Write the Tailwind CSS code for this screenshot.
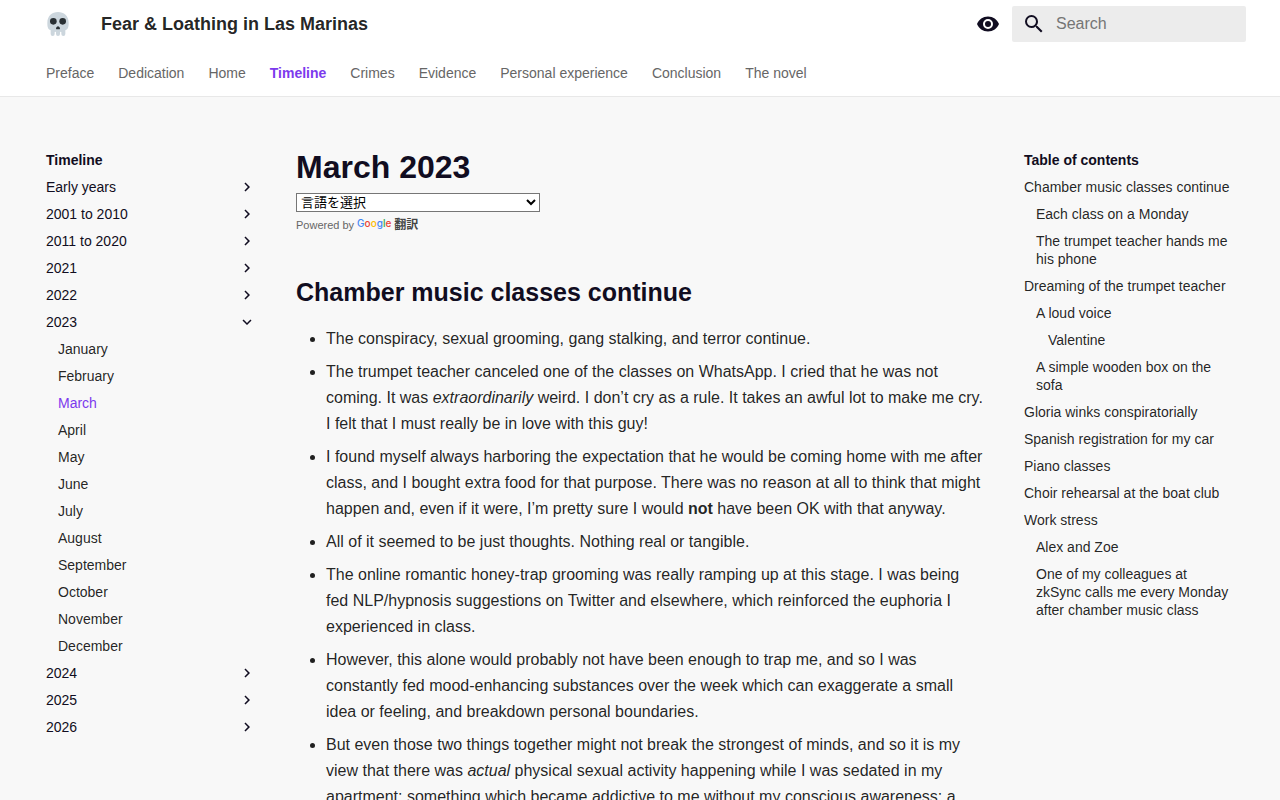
<!DOCTYPE html>
<html lang="en">
<head>
  <meta charset="UTF-8">
  <meta name="viewport" content="width=device-width, initial-scale=1">
  <title>March 2023 - Fear &amp; Loathing in Las Marinas</title>
  <script src="https://cdn.jsdelivr.net/npm/@tailwindcss/browser@4"></script>
</head>
<body class="bg-[#f8f8f8] text-black/87 font-['Liberation_Sans',Arial,sans-serif]">

  <svg class="hidden">
    <symbol id="chevron" viewBox="0 0 24 24">
      <path fill="currentColor" d="M8.59 16.58 13.17 12 8.59 7.41 10 6l6 6-6 6-1.41-1.42Z"/>
    </symbol>
  </svg>

  <!-- Header -->
  <header class="bg-white border-b border-[#e8e8e8]">
    <div class="max-w-[1220px] mx-auto">
      <div class="flex items-center h-12 pl-4 pr-1">
        <a href="#" aria-label="Home">
          <svg class="w-6 h-6" viewBox="0 0 36 36">
            <path fill="#CCD6DD" d="M34 16C34 6 26.837 0 18 0S2 6 2 16c0 6 .5 9.500 5 11.500V33a3 3 0 0 0 6 0v-2.500a1 1 0 0 1 2 0V33a3 3 0 0 0 6 0v-2.500a1 1 0 0 1 2 0V33a3 3 0 0 0 6 0v-5.500c4.500-2 5-5.500 5-11.500Z"/>
            <circle fill="#292F33" cx="11" cy="14" r="5"/>
            <circle fill="#292F33" cx="25" cy="14" r="5"/>
            <path fill="#292F33" d="M18 21.500c-1.200 0-3 2-3 3.200 0 .8.6 1.300 1.500 1.300h3c.9 0 1.500-.5 1.500-1.300 0-1.200-1.800-3.200-3-3.200Z"/>
          </svg>
        </a>
        <a href="#" class="ml-[31px] flex-1 text-lg leading-6 font-bold">Fear &amp; Loathing in Las Marinas</a>
        <button type="button" aria-label="Switch to dark mode" class="mr-3 text-[#110d21]">
          <svg class="w-6 h-6" viewBox="0 0 24 24">
            <path fill="currentColor" d="M12 9a3 3 0 0 0-3 3 3 3 0 0 0 3 3 3 3 0 0 0 3-3 3 3 0 0 0-3-3m0 8a5 5 0 0 1-5-5 5 5 0 0 1 5-5 5 5 0 0 1 5 5 5 5 0 0 1-5 5m0-12.500C7 4.500 2.730 7.610 1 12c1.730 4.390 6 7.500 11 7.500s9.270-3.110 11-7.500c-1.730-4.390-6-7.500-11-7.500Z"/>
          </svg>
        </button>
        <label class="flex items-center gap-[10px] w-[234px] h-9 px-[10px] rounded-[2px] bg-[#ececec] text-[#110d21]">
          <svg class="w-6 h-6 shrink-0" viewBox="0 0 24 24">
            <path fill="currentColor" d="M9.500 3A6.500 6.500 0 0 1 16 9.500c0 1.610-.590 3.090-1.560 4.230l.270.270h.790l5 5-1.500 1.500-5-5v-.790l-.270-.270A6.516 6.516 0 0 1 9.500 16 6.500 6.500 0 0 1 3 9.500 6.500 6.500 0 0 1 9.500 3m0 2C7 5 5 7 5 9.500S7 14 9.500 14 14 12 14 9.500 12 5 9.500 5Z"/>
          </svg>
          <input type="text" placeholder="Search" aria-label="Search" class="min-w-0 flex-1 text-base outline-none placeholder:text-[#757575]">
        </label>
      </div>
      <nav class="flex items-center gap-6 h-12 px-4 pt-[2px] text-sm text-[#666]">
        <a href="#">Preface</a>
        <a href="#">Dedication</a>
        <a href="#">Home</a>
        <a href="#" class="font-bold text-[#7c3aed]">Timeline</a>
        <a href="#">Crimes</a>
        <a href="#">Evidence</a>
        <a href="#">Personal experience</a>
        <a href="#">Conclusion</a>
        <a href="#">The novel</a>
      </nav>
    </div>
  </header>

  <div class="flex max-w-[1220px] mx-auto pt-[54px]">

    <!-- Timeline nav -->
    <nav class="w-[242px] shrink-0 px-4 text-sm leading-[18px] text-[#110d21]">
      <h2 class="font-bold">Timeline</h2>
      <ul class="mt-[9px] space-y-[9px]">
        <li><a href="#" class="flex justify-between">Early years <svg class="size-[18px]"><use href="#chevron"/></svg></a></li>
        <li><a href="#" class="flex justify-between">2001 to 2010 <svg class="size-[18px]"><use href="#chevron"/></svg></a></li>
        <li><a href="#" class="flex justify-between">2011 to 2020 <svg class="size-[18px]"><use href="#chevron"/></svg></a></li>
        <li><a href="#" class="flex justify-between">2021 <svg class="size-[18px]"><use href="#chevron"/></svg></a></li>
        <li><a href="#" class="flex justify-between">2022 <svg class="size-[18px]"><use href="#chevron"/></svg></a></li>
        <li>
          <a href="#" class="flex justify-between">2023 <svg class="size-[18px] rotate-90"><use href="#chevron"/></svg></a>
          <ul class="mt-[9px] space-y-[9px] pl-3 text-black/87">
            <li><a href="#">January</a></li>
            <li><a href="#">February</a></li>
            <li><a href="#" class="text-[#7c3aed]">March</a></li>
            <li><a href="#">April</a></li>
            <li><a href="#">May</a></li>
            <li><a href="#">June</a></li>
            <li><a href="#">July</a></li>
            <li><a href="#">August</a></li>
            <li><a href="#">September</a></li>
            <li><a href="#">October</a></li>
            <li><a href="#">November</a></li>
            <li><a href="#">December</a></li>
          </ul>
        </li>
        <li><a href="#" class="flex justify-between">2024 <svg class="size-[18px]"><use href="#chevron"/></svg></a></li>
        <li><a href="#" class="flex justify-between">2025 <svg class="size-[18px]"><use href="#chevron"/></svg></a></li>
        <li><a href="#" class="flex justify-between">2026 <svg class="size-[18px]"><use href="#chevron"/></svg></a></li>
      </ul>
    </nav>

    <!-- Content -->
    <main class="flex-1 min-w-0 px-6">
      <h1 class="text-[32px] leading-8 font-bold text-[#110d21]">March 2023</h1>
      <div class="mt-[10px]">
        <select aria-label="言語翻訳ウィジェット" class="block w-[244px] h-[19px] border border-[#767676] bg-white text-black text-[13px] font-['Liberation_Sans','Noto_Sans_CJK_JP',sans-serif]">
          <option>言語を選択</option>
        </select>
        <div class="flex items-center gap-[3px] h-[26px] text-[11px] text-[#666]">
          <span>Powered by</span>
          <a href="#" class="flex items-center gap-[3px] text-xs font-bold text-[#444] font-['Liberation_Sans','Noto_Sans_CJK_JP',sans-serif]">
            <span class="pb-[2px] text-[10px] font-medium font-['Inter',sans-serif]"><span class="text-[#4285f4]">G</span><span class="text-[#ea4335]">o</span><span class="text-[#fbbc05]">o</span><span class="text-[#4285f4]">g</span><span class="text-[#34a853]">l</span><span class="text-[#ea4335]">e</span></span>
            翻訳
          </a>
        </div>
      </div>

      <h2 class="mt-9 text-[25px] leading-9 font-bold text-[#110d21]">Chamber music classes continue</h2>
      <ul class="mt-4 pl-[30px] list-disc space-y-[7px] text-base leading-[26px]">
        <li>The conspiracy, sexual grooming, gang stalking, and terror continue.</li>
        <li>The trumpet teacher canceled one of the classes on WhatsApp. I cried that he was not coming. It was <em>extraordinarily</em> weird. I don’t cry as a rule. It takes an awful lot to make me cry. I felt that I must really be in love with this guy!</li>
        <li>I found myself always harboring the expectation that he would be coming home with me after class, and I bought extra food for that purpose. There was no reason at all to think that might happen and, even if it were, I’m pretty sure I would <strong>not</strong> have been OK with that anyway.</li>
        <li>All of it seemed to be just thoughts. Nothing real or tangible.</li>
        <li>The online romantic honey-trap grooming was really ramping up at this stage. I was being fed NLP/hypnosis suggestions on Twitter and elsewhere, which reinforced the euphoria I experienced in class.</li>
        <li>However, this alone would probably not have been enough to trap me, and so I was constantly fed mood-enhancing substances over the week which can exaggerate a small idea or feeling, and breakdown personal boundaries.</li>
        <li>But even those two things together might not break the strongest of minds, and so it is my view that there was <em>actual</em> physical sexual activity happening while I was sedated in my apartment: something which became addictive to me without my conscious awareness: a</li>
      </ul>
    </main>

    <!-- Table of contents -->
    <nav class="w-[242px] shrink-0 px-4 text-sm leading-[18px]">
      <h2 class="font-bold text-[#110d21]">Table of contents</h2>
      <ul class="mt-[9px] space-y-[9px]">
        <li><a href="#">Chamber music classes continue</a></li>
        <li class="pl-3"><a href="#">Each class on a Monday</a></li>
        <li class="pl-3"><a href="#">The trumpet teacher hands me his phone</a></li>
        <li><a href="#">Dreaming of the trumpet teacher</a></li>
        <li class="pl-3"><a href="#">A loud voice</a></li>
        <li class="pl-6"><a href="#">Valentine</a></li>
        <li class="pl-3"><a href="#">A simple wooden box on the sofa</a></li>
        <li><a href="#">Gloria winks conspiratorially</a></li>
        <li><a href="#">Spanish registration for my car</a></li>
        <li><a href="#">Piano classes</a></li>
        <li><a href="#">Choir rehearsal at the boat club</a></li>
        <li><a href="#">Work stress</a></li>
        <li class="pl-3"><a href="#">Alex and Zoe</a></li>
        <li class="pl-3"><a href="#">One of my colleagues at zkSync calls me every Monday after chamber music class</a></li>
      </ul>
    </nav>
  </div>
</body>
</html>
